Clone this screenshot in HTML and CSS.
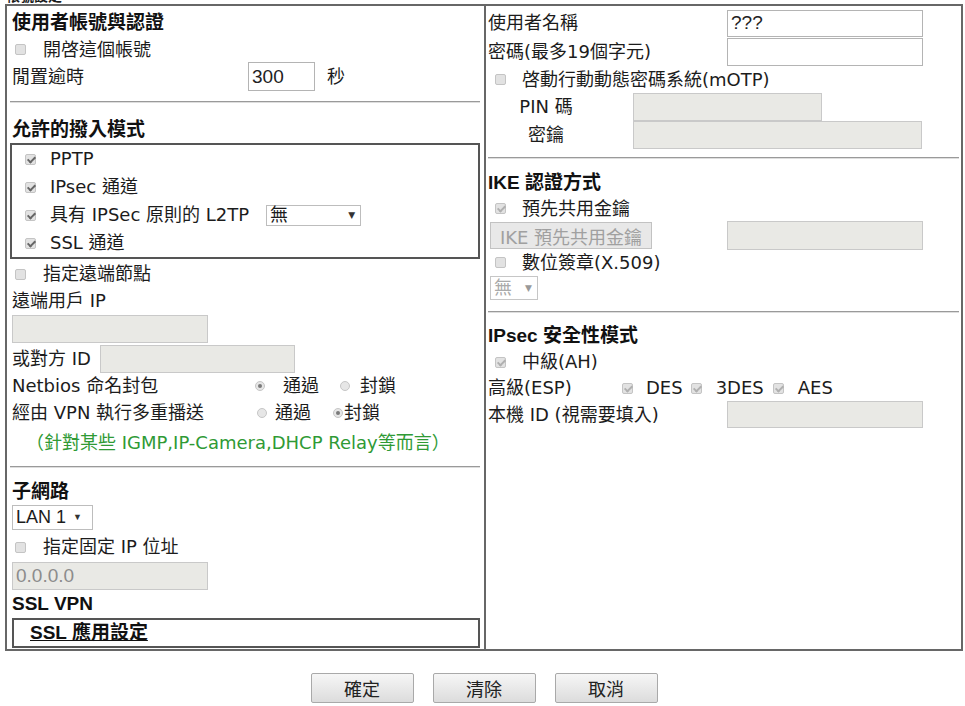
FILE: index.html
```html
<!DOCTYPE html>
<html lang="zh-Hant">
<head>
    <meta charset="UTF-8">
    <meta name="viewport" content="width=device-width, initial-scale=1.0">
    <title>帳號設定</title>
    <link rel="stylesheet" href="styles.css">
</head>
<body>

<div class="page-title"><span>帳號設定</span></div>

<form class="panel" id="accountForm">
    <!-- left column: account, dial-in, remote node, subnet -->
    <div class="col col-left">
        <div class="row head r27">使用者帳號與認證</div>
        <label class="row r25"><span class="cb"></span>開啓這個帳號</label>
        <div class="row r29">
            <span class="lbl lbl-idle">閒置逾時</span>
            <input class="txt txt-idle" type="text" value="300">
            <span class="unit">秒</span>
        </div>

        <div class="rule rule-a"></div>

        <div class="row head r25">允許的撥入模式</div>
        <div class="group dialin">
            <label class="row r28"><span class="cb on"></span>PPTP</label>
            <label class="row r28"><span class="cb on"></span>IPsec 通道</label>
            <label class="row r28"><span class="cb on"></span>具有 IPSec 原則的 L2TP
                <span class="select sel-l2tp"><span>無</span><span class="arrow">▼</span></span>
            </label>
            <label class="row r28"><span class="cb on"></span>SSL 通道</label>
        </div>

        <label class="row r30"><span class="cb"></span>指定遠端節點</label>
        <div class="row r24">遠端用戶 IP</div>
        <div class="row r32"><input class="txt dis txt-ip" type="text" disabled></div>
        <div class="row r28">
            <span class="lbl lbl-peer">或對方 ID</span>
            <input class="txt dis txt-peer" type="text" disabled>
        </div>
        <div class="row r25">
            <span class="lbl lbl-netbios">Netbios 命名封包</span>
            <span class="rd on"></span><span class="opt opt-nb1">通過</span>
            <span class="rd rd-nb2"></span><span class="opt opt-nb2">封鎖</span>
        </div>
        <div class="row r30">
            <span class="lbl lbl-mcast">經由 VPN 執行多重播送</span>
            <span class="rd"></span><span class="opt opt-mc1">通過</span>
            <span class="rd on rd-mc2"></span><span class="opt opt-mc2">封鎖</span>
        </div>
        <div class="row r30 note">（針對某些 IGMP,IP-Camera,DHCP Relay等而言）</div>

        <div class="rule rule-b"></div>

        <div class="row head r26">子網路</div>
        <div class="row r25">
            <span class="select sel-lan"><span>LAN 1</span><span class="arrow">▼</span></span>
        </div>
        <label class="row r30 fixed-ip"><span class="cb"></span>指定固定 IP 位址</label>
        <div class="row r28"><input class="txt dis txt-ip" type="text" value="0.0.0.0" disabled></div>
        <div class="row head r28">SSL VPN</div>
        <div class="group ssl">
            <div class="row r26"><a class="ssl-link">SSL 應用設定</a></div>
        </div>
    </div>

    <!-- right column: login, mOTP, IKE, IPsec -->
    <div class="col col-right">
        <div class="row r28">
            <span class="lbl lbl-r">使用者名稱</span>
            <input class="txt txt-r h27" type="text" value="???">
        </div>
        <div class="row r29">
            <span class="lbl lbl-r">密碼(最多19個字元)</span>
            <input class="txt txt-r h28" type="password">
        </div>
        <label class="row r27"><span class="cb"></span>啓動行動動態密碼系統(mOTP)</label>
        <div class="row r28">
            <span class="lbl lbl-otp">PIN 碼</span>
            <input class="txt dis txt-pin" type="text" disabled>
        </div>
        <div class="row r28">
            <span class="lbl lbl-otp">密鑰</span>
            <input class="txt dis txt-key" type="text" disabled>
        </div>

        <div class="rule rule-c"></div>

        <div class="row head r26">IKE 認證方式</div>
        <label class="row r25"><span class="cb on dis"></span>預先共用金鑰</label>
        <div class="row r29">
            <button class="btn-psk" type="button" disabled>IKE 預先共用金鑰</button>
            <input class="txt dis txt-psk" type="text" disabled>
        </div>
        <label class="row r25"><span class="cb"></span>數位簽章(X.509)</label>
        <div class="row r26">
            <span class="select sel-cert"><span>無</span><span class="arrow">▼</span></span>
        </div>

        <div class="rule rule-d"></div>

        <div class="row head r26">IPsec 安全性模式</div>
        <label class="row r26"><span class="cb on dis"></span>中級(AH)</label>
        <div class="row r26 esp">
            <span class="lbl lbl-esp">高級(ESP)</span>
            <span class="cb on dis"></span><span class="alg">DES</span>
            <span class="cb on dis"></span><span class="alg">3DES</span>
            <span class="cb on dis"></span><span class="alg">AES</span>
        </div>
        <div class="row r27">
            <span class="lbl lbl-r">本機 ID (視需要填入)</span>
            <input class="txt dis txt-r h27" type="text" disabled>
        </div>
    </div>
</form>

<div class="actions">
    <button type="button">確定</button>
    <button type="button">清除</button>
    <button type="button">取消</button>
</div>

</body>
</html>
```

FILE: styles.css
```css
body {
    margin: 0;
    font-family: "DejaVu Sans", "Noto Sans CJK TC", sans-serif;
    font-size: 18px;
    line-height: 1.2;
    color: #1c1c1c;
    background-color: #fff;
}

/* only the bottom of the page heading shows above the panel */
.page-title {
    height: 4px;
    overflow: hidden;
    margin-left: 6px;
    font-family: "Liberation Sans", "Noto Sans CJK TC", sans-serif;
    font-weight: bold;
    font-size: 14px;
}
.page-title span {
    display: block;
    line-height: 16px;
    margin-top: -12px;
}

.panel {
    display: grid;
    grid-template-columns: 479px 475px;
    width: 954px;
    margin: 0 0 0 5px;
    border: 2px solid #676767;
}
.col-left {
    padding: 4px 4px 1px 5px;
    border-right: 2px solid #676767;
}
.col-right {
    padding: 3px 2px 0 2px;
}

.row {
    display: flex;
    align-items: center;
    white-space: nowrap;
}
.r24 { height: 24px; }
.r25 { height: 25px; }
.r26 { height: 26px; }
.r27 { height: 27px; }
.r28 { height: 28px; }
.r29 { height: 29px; }
.r30 { height: 30px; }
.r32 { height: 32px; }

.head {
    font-family: "Liberation Sans", "Noto Sans CJK TC", sans-serif;
    font-weight: bold;
    font-size: 19px;
    color: #111;
}

.rule {
    border-top: 1px solid #9a9a9a;
    border-bottom: 1px solid #dedede;
}
.col-left .rule { margin-left: -2px; }
.rule-a { margin-top: 10px; margin-bottom: 15px; }
.rule-b { margin-top: 8px; margin-bottom: 11px; }
.rule-c { margin-top: 8px; margin-bottom: 11px; }
.rule-d { margin-top: 10px; margin-bottom: 10px; }

.group {
    border: 2px solid #555;
    margin-left: -2px;
}

/* checkboxes and radios */
.cb {
    position: relative;
    flex: none;
    width: 11px;
    height: 11px;
    box-sizing: border-box;
    border: 1px solid #c4c4c4;
    border-radius: 2px;
    background-color: #e2e2e2;
    margin: 0 17px 0 3px;
}
.cb.on::after {
    content: "";
    position: absolute;
    left: 3px;
    top: 0;
    width: 3px;
    height: 6px;
    border: solid #666;
    border-width: 0 2px 2px 0;
    transform: rotate(45deg);
}
.cb.dis.on::after {
    border-color: #b0b0b0;
}
.dialin .cb { margin: 0 14px 0 13px; }
.col-right .cb { margin: 0 16px 0 7px; }

.rd {
    position: relative;
    flex: none;
    width: 10px;
    height: 10px;
    box-sizing: border-box;
    border: 1px solid #c6c6c6;
    border-radius: 50%;
    background-color: #e6e6e6;
}
.rd.on::after {
    content: "";
    position: absolute;
    left: 2px;
    top: 2px;
    width: 4px;
    height: 4px;
    border-radius: 50%;
    background-color: #7a7a7a;
}

/* text inputs */
.txt {
    box-sizing: border-box;
    height: 28px;
    margin: 0;
    padding: 0 3px;
    border: 1px solid #b4b4b4;
    background-color: #fff;
    font-family: "Liberation Sans", "Noto Sans CJK TC", sans-serif;
    font-size: 19px;
    color: #222;
}
.txt.dis {
    background-color: #e9e9e5;
    border-color: #c9c9c9;
    color: #8c8c8c;
}
.h27 { height: 27px; }
.h28 { height: 28px; }

.lbl { flex: none; }
.lbl-idle { width: 236px; }
.txt-idle { width: 67px; height: 29px; }
.unit { margin-left: 12px; }
.txt-ip { width: 196px; }
.lbl-peer { width: 88px; }
.txt-peer { width: 195px; }

.lbl-netbios { width: 243px; }
.opt-nb1 { margin-left: 18px; }
.rd-nb2 { margin-left: 21px; }
.opt-nb2 { margin-left: 10px; }
.lbl-mcast { width: 245px; }
.opt-mc1 { margin-left: 8px; }
.rd-mc2 { margin-left: 22px; }
.opt-mc2 { margin-left: 1px; }

.note {
    padding-left: 14px;
    color: #2f9a35;
}

.fixed-ip { margin-top: 2px; }

.select {
    display: inline-flex;
    align-items: center;
    justify-content: space-between;
    box-sizing: border-box;
    border: 1px solid #bdbdbd;
    background-color: #fff;
    padding: 0 5px 0 3px;
}
.select .arrow {
    font-size: 9px;
    color: #333;
}
.sel-l2tp {
    width: 95px;
    height: 21px;
    margin-left: 17px;
}
.sel-lan {
    width: 81px;
    height: 25px;
    font-family: "Liberation Sans", "Noto Sans CJK TC", sans-serif;
    padding-right: 10px;
}
.sel-cert {
    width: 48px;
    height: 24px;
    margin-left: 2px;
    color: #aaa;
    border-color: #c6c6c6;
}
.sel-cert .arrow { color: #999; }

.ssl {
    margin-left: 0;
}
.ssl-link {
    padding-left: 16px;
    font-family: "Liberation Sans", "Noto Sans CJK TC", sans-serif;
    font-weight: bold;
    font-size: 19px;
    text-decoration: underline;
    color: #111;
}

/* right column */
.lbl-r { width: 239px; }
.txt-r { width: 196px; }
.lbl-otp {
    width: 116px;
    text-align: center;
}
.txt-pin { width: 189px; margin-left: 29px; }
.txt-key { width: 289px; margin-left: 29px; }

.btn-psk {
    box-sizing: border-box;
    width: 162px;
    height: 27px;
    margin: 0 75px 0 2px;
    padding: 0;
    border: 1px solid #c2c2c2;
    background-color: #e8e8e8;
    font-family: "DejaVu Sans", "Noto Sans CJK TC", sans-serif;
    font-size: 18px;
    color: #a0a0a0;
}
.txt-psk { width: 196px; height: 29px; }

.lbl-esp { width: 134px; }
.esp .cb { margin: 0; }
.esp .alg { margin: 0 9px 0 14px; }
.esp .alg:nth-of-type(3) { margin-left: 13px; margin-right: 8px; }

/* bottom buttons */
.actions {
    display: flex;
    justify-content: center;
    gap: 19px;
    width: 958px;
    margin: 22px 0 0 5px;
}
.actions button {
    box-sizing: border-box;
    width: 103px;
    height: 30px;
    border: 1px solid #a9a9a9;
    border-radius: 2px;
    background: linear-gradient(#f6f6f6, #dcdcdc);
    font-family: "Noto Sans CJK TC", sans-serif;
    font-size: 18px;
    color: #222;
    cursor: pointer;
}
.actions button:hover {
    background: linear-gradient(#fafafa, #e6e6e6);
}
```
